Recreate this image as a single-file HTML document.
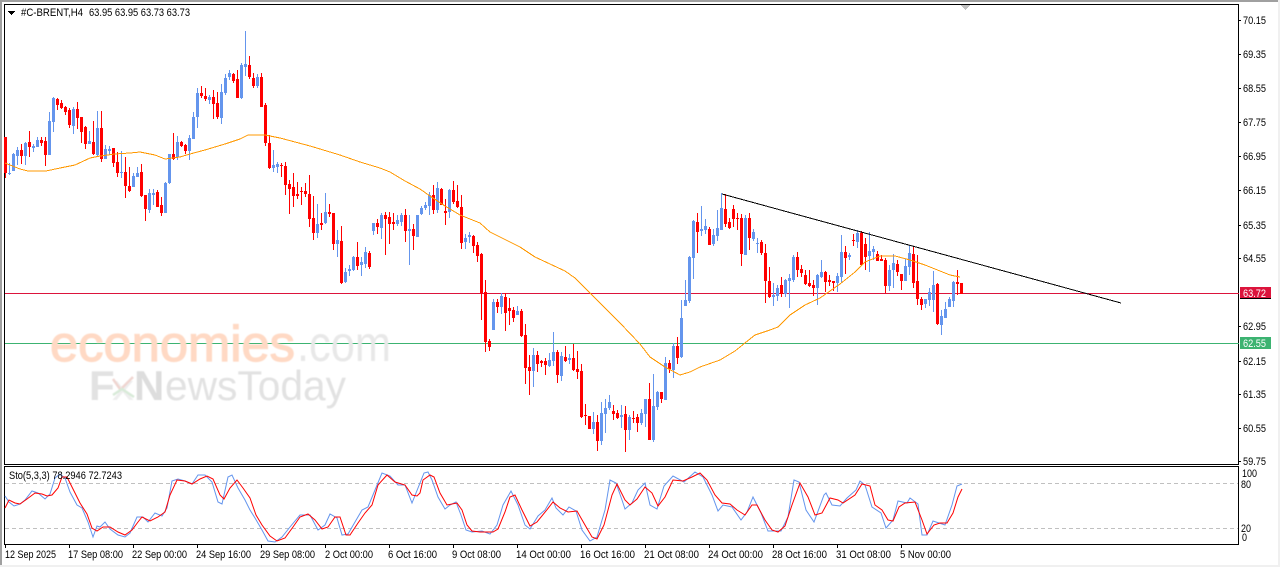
<!DOCTYPE html>
<html><head><meta charset="utf-8"><title>#C-BRENT,H4</title>
<style>
html,body{margin:0;padding:0;width:1280px;height:567px;overflow:hidden;background:#fff}
svg{display:block;position:absolute;left:0;top:0}
text{font-family:"Liberation Sans",sans-serif;fill:#000}
.ax{font-size:11px}
</style></head><body>
<svg width="1280" height="567" viewBox="0 0 1280 567" xmlns="http://www.w3.org/2000/svg">
<rect width="1280" height="567" fill="#fff"/>
<g shape-rendering="crispEdges">
<rect x="0" y="0" width="1280" height="2" fill="#a0a0a0"/>
<rect x="0" y="0" width="2" height="565" fill="#a0a0a0"/>
<rect x="1278" y="0" width="2" height="567" fill="#f0f0f0"/>
<rect x="0" y="565" width="1280" height="2" fill="#f0f0f0"/>
<path d="M4.5 4.5H1238.5V464.5H4.5ZM4.5 466.5H1238.5V544.5H4.5Z" fill="none" stroke="#000"/>
<path d="M961 5H970V6H969V7H968V8H967V9H966V10H965V9H964V8H963V7H962V6H961Z" fill="#c0c0c0"/>
<path d="M1238 20.5h3M1238 54.5h3M1238 88.5h3M1238 122.5h3M1238 156.5h3M1238 190.5h3M1238 225.5h3M1238 258.5h3M1238 326.5h3M1238 361.5h3M1238 394.5h3M1238 428.5h3M1238 461.5h3M5.5 544v4M69.5 544v4M133.5 544v4M197.5 544v4M261.5 544v4M325.5 544v4M389.5 544v4M453.5 544v4M517.5 544v4M581.5 544v4M645.5 544v4M709.5 544v4M773.5 544v4M837.5 544v4M901.5 544v4" stroke="#000" fill="none"/>
<path d="M8 11H15V12H14V13H13V14H12V15H11V14H10V13H9V12H8Z" fill="#000"/>
<path d="M5 483.5H1238M5 528.5H1238" stroke="#c0c0c0" stroke-dasharray="4 3" fill="none"/>
<path d="M5 293.5H1239" stroke="#dc143c" fill="none"/>
<path d="M5 343.5H1239" stroke="#3cb371" fill="none"/>
<!-- blue wicks -->
<path fill="none" stroke="#6495ed" d="M9.5 163V175M13.5 153V171M17.5 147V165M25.5 142V165M33.5 144V152M37.5 137V147M49.5 112V155M53.5 97V132M73.5 107V134M89.5 131V144M97.5 111V157M105.5 145V159M109.5 146V155M121.5 151V178M133.5 173V187M137.5 167V177M149.5 189V213M153.5 189V205M165.5 182V213M169.5 154V184M177.5 136V160M189.5 135V160M193.5 112V139M197.5 88V128M209.5 95V104M221.5 84V124M225.5 74V95M229.5 70V80M241.5 63V99M245.5 31V76M257.5 74V88M273.5 150V172M277.5 162V173M317.5 204V238M325.5 193V224M337.5 230V257M345.5 268V283M349.5 265V276M353.5 256V271M361.5 257V276M365.5 247V268M373.5 223V235M381.5 213V239M397.5 215V226M401.5 213V226M409.5 215V265M417.5 215V237M421.5 206V215M425.5 202V210M429.5 192V215M437.5 182V213M449.5 189V218M465.5 234V249M469.5 232V243M493.5 299V330M501.5 293V314M517.5 306V315M533.5 348V387M549.5 353V367M553.5 332V366M561.5 352V381M569.5 354V364M593.5 412V434M601.5 402V445M605.5 399V433M609.5 395V410M621.5 405V428M629.5 415V440M641.5 409V425M645.5 399V427M653.5 374V442M657.5 391V410M665.5 357V400M673.5 343V378M681.5 300V358M685.5 280V306M689.5 256V303M693.5 220V279M701.5 206V236M705.5 219V234M713.5 229V246M717.5 210V241M721.5 193V230M745.5 215V255M753.5 229V241M757.5 238V253M773.5 283V306M777.5 285V301M785.5 279V297M789.5 274V308M793.5 255V282M817.5 274V305M821.5 260V278M837.5 273V292M841.5 235V283M849.5 253V260M857.5 230V248M869.5 232V272M873.5 246V260M889.5 265V291M893.5 254V288M905.5 259V281M909.5 245V275M925.5 299V308M929.5 288V306M933.5 271V312M941.5 310V335M945.5 302V318M949.5 297V307M953.5 281V307"/>
<!-- blue bodies -->
<path fill="none" stroke="#6495ed" stroke-width="3" d="M9.5 173V174M13.5 154V171M17.5 150V156M25.5 143V156M33.5 146V148M37.5 140V147M49.5 121V155M53.5 98V122M73.5 109V126M89.5 141V144M97.5 128V155M105.5 149V159M109.5 149V151M121.5 172V173M133.5 176V187M137.5 173V177M149.5 193V210M153.5 193V195M165.5 183V213M169.5 154V183M177.5 142V157M189.5 138V151M193.5 117V139M197.5 93V117M209.5 97V100M221.5 92V118M225.5 78V93M229.5 73V77M241.5 65V98M245.5 64V67M257.5 77V86M273.5 165V168M277.5 164V167M317.5 224V233M325.5 212V223M337.5 240V244M345.5 272V282M349.5 269V271M353.5 257V270M361.5 262V265M365.5 252V264M373.5 223V231M381.5 215V228M397.5 220V224M401.5 215V222M409.5 229V231M417.5 215V237M421.5 208V214M425.5 205V208M429.5 195V206M437.5 188V210M449.5 190V212M465.5 238V242M469.5 235V237M493.5 302V330M501.5 296V307M517.5 311V315M533.5 355V371M549.5 360V366M553.5 352V361M561.5 356V376M569.5 358V360M593.5 422V429M601.5 413V441M605.5 408V414M609.5 402V408M621.5 415V417M629.5 417V430M641.5 413V423M645.5 399V414M653.5 406V440M657.5 392V407M665.5 363V400M673.5 346V370M681.5 318V357M685.5 300V306M689.5 257V301M693.5 221V258M701.5 229V231M705.5 226V230M713.5 235V244M717.5 228V236M721.5 208V230M745.5 218V255M753.5 232V239M757.5 243V244M773.5 295V297M777.5 288V296M785.5 280V294M789.5 278V281M793.5 257V280M817.5 275V288M821.5 272V277M837.5 276V283M841.5 252V277M849.5 255V257M857.5 233V242M869.5 251V256M873.5 249V252M889.5 270V286M893.5 263V270M905.5 266V281M909.5 253V267M925.5 299V304M929.5 292V300M933.5 285V300M941.5 316V325M945.5 309V318M949.5 299V307M953.5 282V301"/>
<!-- red wicks -->
<path fill="none" stroke="#f00" d="M5.5 137V178M21.5 144V164M29.5 131V157M41.5 137V146M45.5 137V166M57.5 98V110M61.5 100V109M65.5 106V115M69.5 108V128M77.5 102V129M81.5 117V143M85.5 126V149M93.5 121V155M101.5 111V162M113.5 148V167M117.5 152V177M125.5 157V198M129.5 167V192M141.5 164V197M145.5 195V221M157.5 190V207M161.5 197V216M173.5 133V160M181.5 141V147M185.5 144V154M201.5 86V98M205.5 88V101M213.5 90V119M217.5 92V119M233.5 73V83M237.5 70V98M249.5 56V79M253.5 73V88M261.5 73V107M265.5 103V146M269.5 135V169M281.5 163V177M285.5 162V195M289.5 180V214M293.5 173V207M297.5 182V199M301.5 187V205M305.5 183V197M309.5 175V227M313.5 196V240M321.5 213V230M329.5 204V217M333.5 213V250M341.5 226V284M357.5 242V270M369.5 251V269M377.5 219V234M385.5 212V255M389.5 212V244M393.5 213V230M405.5 209V242M413.5 224V250M433.5 185V214M441.5 188V205M445.5 199V225M453.5 181V204M457.5 185V208M461.5 195V249M473.5 235V253M477.5 242V262M481.5 253V320M485.5 280V352M489.5 339V351M497.5 299V313M505.5 293V331M509.5 298V325M513.5 307V322M521.5 309V337M525.5 324V384M529.5 355V395M537.5 351V372M541.5 360V367M545.5 358V375M557.5 350V383M565.5 346V362M573.5 344V371M577.5 351V379M581.5 364V418M585.5 404V425M589.5 416V429M597.5 415V451M613.5 405V420M617.5 410V419M625.5 406V452M633.5 411V423M637.5 414V432M649.5 383V440M661.5 392V403M669.5 360V373M677.5 337V364M697.5 213V253M709.5 227V245M725.5 194V227M729.5 218V229M733.5 205V227M737.5 213V230M741.5 214V266M749.5 213V250M761.5 240V255M765.5 244V303M769.5 267V298M781.5 277V297M797.5 252V277M801.5 265V277M805.5 270V285M809.5 270V287M813.5 280V296M825.5 271V292M829.5 275V286M833.5 281V291M845.5 246V274M853.5 234V246M861.5 231V265M865.5 238V270M877.5 251V261M881.5 255V261M885.5 258V293M897.5 260V276M901.5 274V290M913.5 247V288M917.5 255V305M921.5 297V310M937.5 283V325M957.5 270V295M961.5 283V294"/>
<!-- red bodies -->
<path fill="none" stroke="#f00" stroke-width="3" d="M5.5 137V173M21.5 150V156M29.5 142V147M41.5 140V143M45.5 141V155M57.5 99V105M61.5 103V108M65.5 107V112M69.5 110V125M77.5 109V118M81.5 117V132M85.5 127V144M93.5 142V154M101.5 128V159M113.5 148V163M117.5 162V173M125.5 172V186M129.5 186V191M141.5 172V196M145.5 195V209M157.5 192V207M161.5 205V213M173.5 154V159M181.5 142V146M185.5 145V151M201.5 93V96M205.5 96V99M213.5 97V104M217.5 103V117M233.5 74V81M237.5 79V98M249.5 65V77M253.5 78V86M261.5 77V107M265.5 105V143M269.5 143V168M281.5 165V166M285.5 166V185M289.5 184V189M293.5 187V196M297.5 194V196M301.5 191V192M305.5 191V194M309.5 194V219M313.5 218V233M321.5 223V225M329.5 212V214M333.5 213V244M341.5 241V283M357.5 257V266M369.5 253V267M377.5 223V227M385.5 215V219M389.5 217V224M393.5 222V224M405.5 215V231M413.5 229V236M433.5 195V210M441.5 189V205M445.5 211V213M453.5 190V202M457.5 201V207M461.5 207V243M473.5 236V246M477.5 245V256M481.5 254V293M485.5 292V342M489.5 341V347M497.5 302V307M505.5 297V313M509.5 308V311M513.5 310V318M521.5 311V336M525.5 335V368M529.5 367V371M537.5 355V364M541.5 361V363M545.5 361V365M557.5 352V375M565.5 357V361M573.5 358V370M577.5 369V372M581.5 371V417M585.5 415V416M589.5 416V429M597.5 422V441M613.5 411V414M617.5 413V418M625.5 414V430M633.5 418V419M637.5 417V423M649.5 399V440M661.5 392V399M669.5 363V369M677.5 346V358M697.5 222V232M709.5 229V245M725.5 209V224M729.5 222V228M733.5 209V219M737.5 218V219M741.5 218V254M749.5 218V238M761.5 242V253M765.5 253V281M769.5 281V297M781.5 285V294M797.5 257V270M801.5 269V273M805.5 275V284M809.5 283V286M813.5 285V288M825.5 272V282M829.5 280V282M833.5 281V283M845.5 252V258M853.5 240V241M861.5 233V265M865.5 244V257M877.5 254V261M881.5 259V261M885.5 260V286M897.5 264V272M901.5 274V281M913.5 254V283M917.5 281V299M921.5 299V305M937.5 284V324M957.5 282V284M961.5 283V294"/>
</g>
<!-- moving average -->
<polyline fill="none" stroke="#ff9800" stroke-width="1" shape-rendering="crispEdges" points="5,163 20,169 28,171 46,171 60,168 75,165 90,158 100,156 115,154 130,153 140,152 155,155 165,159 180,157 190,154 205,150 225,144 240,139 248,135 265,135 280,138 295,142 310,146 320,149 340,155 360,162 380,168 390,172 405,181 420,189 430,196 445,206 460,215 470,219 480,223 490,232 510,242 520,247 535,257 550,264 565,271 575,278 590,293 605,308 620,323 640,344 650,357 665,367 680,375 690,372 700,367 720,360 735,351 755,335 770,330 778,327 790,315 805,305 820,298 840,284 855,272 865,262 880,256 895,256 910,260 925,265 935,269 950,275 960,277"/>
<!-- trendline -->
<line x1="722" y1="194" x2="1121" y2="303" stroke="#000" stroke-width="1" shape-rendering="crispEdges"/>
<!-- stochastic -->
<polyline fill="none" stroke="#6495ed" stroke-width="1" points="5,496 9,502 14,506 20,504 25,500 32,491 38,493 45,499 50,494 55,478 60,474 65,478 70,492 77,505 82,508 88,522 93,537 97,526 100,527 105,522 110,529 118,535 125,537 130,533 137,517 143,517 148,522 155,513 162,516 167,508 172,481 178,479 185,481 192,484 198,475 205,475 212,482 218,502 222,504 228,477 232,475 238,488 245,500 250,510 255,518 262,530 268,541 275,542 282,537 290,527 300,515 310,515 318,530 325,525 330,514 337,518 342,535 348,534 355,522 362,510 368,507 375,490 382,473 390,476 398,485 405,485 412,503 420,483 424,473 428,472 432,480 438,497 445,509 450,505 456,502 461,515 466,530 472,532 482,531 490,534 497,525 503,505 511,491 518,505 525,525 530,529 538,516 545,510 552,498 556,508 563,515 569,507 576,511 582,530 590,541 597,537 605,510 610,480 616,483 622,500 625,509 632,503 638,490 645,483 650,505 657,509 664,486 673,476 684,482 695,472 703,477 712,495 718,511 723,505 732,507 741,520 747,512 753,497 761,513 768,531 781,531 788,517 794,480 799,482 806,510 814,522 824,495 826,493 832,505 840,506 847,498 856,490 860,481 865,485 872,507 881,513 886,528 893,520 898,501 907,503 910,498 918,504 922,535 927,535 933,521 945,525 952,505 957,486 962,484"/>
<polyline fill="none" stroke="#f00" stroke-width="1" points="5,508 9,500 15,503 20,504 27,499 35,493 42,494 47,496 52,495 58,488 62,477 67,477 72,487 80,503 87,514 92,528 97,531 103,527 110,527 118,532 125,535 132,530 138,522 142,517 150,521 158,517 165,512 170,495 177,480 185,481 192,484 200,479 207,476 213,479 220,495 224,499 230,488 237,480 243,488 250,498 256,515 262,525 270,536 277,541 285,538 293,527 300,517 308,514 315,520 322,529 328,527 335,517 340,517 346,535 350,535 358,523 365,513 372,505 378,485 387,475 395,482 405,485 412,495 417,496 420,493 423,480 430,475 434,477 440,493 447,505 457,503 462,510 467,525 472,531 480,532 493,532 498,529 505,512 510,497 515,495 522,510 530,526 537,522 546,511 553,502 560,508 568,512 577,511 585,525 592,537 597,539 604,525 612,495 617,484 625,500 630,505 637,499 645,487 652,493 658,506 665,497 673,480 683,481 692,477 700,473 707,480 715,495 722,503 730,504 737,510 745,515 752,505 757,505 765,520 772,530 778,532 785,526 792,505 800,483 808,497 815,515 822,513 830,498 838,500 843,503 855,495 862,484 870,486 875,505 882,510 888,520 893,521 899,507 905,503 915,502 922,520 927,534 934,525 940,523 947,523 953,513 958,497 962,489"/>
<!-- watermark -->
<defs><filter id="b" x="-5%" y="-20%" width="110%" height="140%"><feGaussianBlur stdDeviation="0.5"/></filter></defs>
<g filter="url(#b)">
<text x="50" y="361" font-size="50" textLength="245" lengthAdjust="spacingAndGlyphs" style="fill:#ffd9c4;stroke:#ffd9c4;stroke-width:1.2">economies</text>
<text x="297" y="361" font-size="50" textLength="94" lengthAdjust="spacingAndGlyphs" style="fill:#e8e8e8">.com</text>
<text x="89" y="400" font-size="42" style="fill:#e2e2e2;font-weight:bold">F</text>
<text x="112" y="400" font-size="36" textLength="22" lengthAdjust="spacingAndGlyphs" style="fill:#eeeeee">x</text>
<path d="M113 379L120 389M133 377L122 388" stroke="#f0d5d0" stroke-width="2.5" fill="none"/>
<path d="M113 395L122 389L134 397" stroke="#d8ead8" stroke-width="2.5" fill="none"/>
<text x="134" y="400" font-size="42" style="fill:#dddddd;font-weight:bold">N</text>
<text x="165" y="400" font-size="42" textLength="181" lengthAdjust="spacingAndGlyphs" style="fill:#e2e2e2">ewsToday</text>
</g>
<!-- top labels -->
<text x="21" y="16" font-size="11" textLength="62" lengthAdjust="spacingAndGlyphs">#C-BRENT,H4</text>
<text x="89" y="16" font-size="11" textLength="101" lengthAdjust="spacingAndGlyphs">63.95 63.95 63.73 63.73</text>
<text x="9" y="479" font-size="11" textLength="113" lengthAdjust="spacingAndGlyphs">Sto(5,3,3) 78.2946 72.7243</text>
<!-- price axis -->
<g class="ax">
<text x="1243" y="24" textLength="23" lengthAdjust="spacingAndGlyphs">70.15</text>
<text x="1243" y="58" textLength="23" lengthAdjust="spacingAndGlyphs">69.35</text>
<text x="1243" y="92" textLength="23" lengthAdjust="spacingAndGlyphs">68.55</text>
<text x="1243" y="126" textLength="23" lengthAdjust="spacingAndGlyphs">67.75</text>
<text x="1243" y="160" textLength="23" lengthAdjust="spacingAndGlyphs">66.95</text>
<text x="1243" y="194" textLength="23" lengthAdjust="spacingAndGlyphs">66.15</text>
<text x="1243" y="229" textLength="23" lengthAdjust="spacingAndGlyphs">65.35</text>
<text x="1243" y="262" textLength="23" lengthAdjust="spacingAndGlyphs">64.55</text>
<text x="1243" y="330" textLength="23" lengthAdjust="spacingAndGlyphs">62.95</text>
<text x="1243" y="365" textLength="23" lengthAdjust="spacingAndGlyphs">62.15</text>
<text x="1243" y="398" textLength="23" lengthAdjust="spacingAndGlyphs">61.35</text>
<text x="1243" y="432" textLength="23" lengthAdjust="spacingAndGlyphs">60.55</text>
<text x="1243" y="465" textLength="23" lengthAdjust="spacingAndGlyphs">59.75</text>
<g shape-rendering="crispEdges">
<rect x="1240" y="287" width="31" height="12" fill="#dc143c"/>
<rect x="1240" y="298" width="31" height="1" fill="#000"/>
<rect x="1240" y="337" width="31" height="12" fill="#3cb371"/>
</g>
<text x="1243" y="297" textLength="23" lengthAdjust="spacingAndGlyphs" style="fill:#fff">63.72</text>
<text x="1243" y="347" textLength="23" lengthAdjust="spacingAndGlyphs" style="fill:#fff">62.55</text>
<text x="1242" y="477" textLength="15" lengthAdjust="spacingAndGlyphs">100</text>
<text x="1241" y="488" textLength="10" lengthAdjust="spacingAndGlyphs">80</text>
<text x="1241" y="532" textLength="10" lengthAdjust="spacingAndGlyphs">20</text>
<text x="1242" y="541" textLength="5" lengthAdjust="spacingAndGlyphs">0</text>
</g>
<!-- time axis -->
<g class="ax">
<text x="5" y="558" textLength="51" lengthAdjust="spacingAndGlyphs">12 Sep 2025</text>
<text x="68" y="558" textLength="55" lengthAdjust="spacingAndGlyphs">17 Sep 08:00</text>
<text x="132" y="558" textLength="55" lengthAdjust="spacingAndGlyphs">22 Sep 00:00</text>
<text x="196" y="558" textLength="55" lengthAdjust="spacingAndGlyphs">24 Sep 16:00</text>
<text x="260" y="558" textLength="55" lengthAdjust="spacingAndGlyphs">29 Sep 08:00</text>
<text x="325" y="558" textLength="48" lengthAdjust="spacingAndGlyphs">2 Oct 00:00</text>
<text x="388" y="558" textLength="49" lengthAdjust="spacingAndGlyphs">6 Oct 16:00</text>
<text x="452" y="558" textLength="49" lengthAdjust="spacingAndGlyphs">9 Oct 08:00</text>
<text x="516" y="558" textLength="55" lengthAdjust="spacingAndGlyphs">14 Oct 00:00</text>
<text x="580" y="558" textLength="55" lengthAdjust="spacingAndGlyphs">16 Oct 16:00</text>
<text x="644" y="558" textLength="55" lengthAdjust="spacingAndGlyphs">21 Oct 08:00</text>
<text x="708" y="558" textLength="55" lengthAdjust="spacingAndGlyphs">24 Oct 00:00</text>
<text x="772" y="558" textLength="55" lengthAdjust="spacingAndGlyphs">28 Oct 16:00</text>
<text x="836" y="558" textLength="55" lengthAdjust="spacingAndGlyphs">31 Oct 08:00</text>
<text x="900" y="558" textLength="51" lengthAdjust="spacingAndGlyphs">5 Nov 00:00</text>
</g>
</svg>
</body></html>
